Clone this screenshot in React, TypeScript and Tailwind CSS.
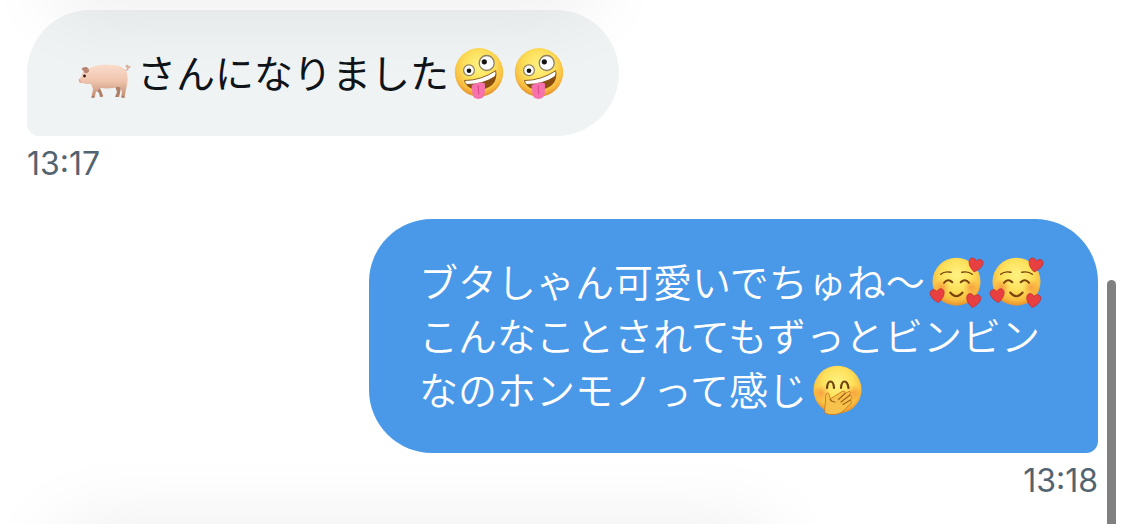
import type { ReactNode } from "react";

const emojiClass = "inline-block h-[54px] w-[60px] overflow-visible align-top";

function FaceGradient({ id }: { id: string }) {
  return (
    <defs>
      <radialGradient id={id} cx="0.5" cy="0.36" r="0.64">
        <stop offset="0" stopColor="#fff384" />
        <stop offset="0.5" stopColor="#fde05a" />
        <stop offset="0.82" stopColor="#f8bd40" />
        <stop offset="1" stopColor="#e68f2a" />
      </radialGradient>
      <radialGradient id={`${id}-blush`}>
        <stop offset="0" stopColor="#f4712f" stopOpacity="0.5" />
        <stop offset="1" stopColor="#f4712f" stopOpacity="0" />
      </radialGradient>
    </defs>
  );
}

function Pig() {
  return (
    <svg className={emojiClass} viewBox="0 -2 60 54" role="img" aria-label="豚">
      <defs>
        <linearGradient id="pig" x1="0" y1="0" x2="0" y2="1">
          <stop offset="0" stopColor="#fbdccb" />
          <stop offset="0.5" stopColor="#efc4ad" />
          <stop offset="1" stopColor="#c08c72" />
        </linearGradient>
      </defs>
      <path d="M20 40l3 2 3 7.500c.5 1-.5 1.700-3 1.500l-1-4-4-4zM38 40l6 1-1 6-1 4h-4l2-5z" fill="#b08069" />
      <path d="M47 24c3 1 4.500-1 4-3.500-.3-2-2.500-1-1.500.5s3 .5 3.500-.5" fill="none" stroke="#d9a58e" strokeWidth="1.200" strokeLinecap="round" />
      <path
        d="M2 33c1-1 2-2 3-4 1-4 4-6 8-7 6-3.500 13-3.500 20-3 8-.5 15 2 17 8 1.300 5 .4 10-.5 14l-2 10.500h-3.500l1-6-2.500-5c-6 2-13 2.500-19 1.500L19 46l-1.500 5.500h-3L16 43l-2-5c-3 0-6 0-8.500-1C2 37.500 1 35 2 33z"
        fill="url(#pig)"
      />
      <path d="M4.500 23c1-2 4-2.500 6-.5l.5 4c-2 1.500-4 .5-4.500-1.500z" fill="#b98472" />
      <path d="M8 22c2-1 4 .5 3 4" fill="none" stroke="#a06859" />
      <circle cx="7.500" cy="30" r="1.400" fill="#3a1712" />
      <path d="M2.300 33.500l1.300 3" stroke="#cf9a89" fill="none" />
      <path d="M14.500 51h3M45 51h2.500" stroke="#8d6558" strokeWidth="1.200" />
    </svg>
  );
}

function ZanyFace({ id }: { id: string }) {
  return (
    <svg className={emojiClass} viewBox="0 -2 60 54" role="img" aria-label="おどけた顔">
      <FaceGradient id={id} />
      <circle cx="30" cy="26.300" r="24.200" fill={`url(#${id})`} />
      <path d="M15.500 34.500Q32 34.500 46.700 24.700Q49 33 43 39Q35 45.500 24 43Q17 41 15.500 34.500z" fill="#8a4d10" />
      <path d="M15.500 34.500Q32 34.500 46.700 24.700Q47.500 28 46 30.500Q34 38.500 17.500 38.500Q16 37 15.500 34.500z" fill="#fff" stroke="#774814" strokeWidth="0.800" />
      <path d="M22.500 39.500Q29 35 36 37.500L35.800 47Q35 52.800 29.500 53Q24 52.800 23.500 48z" fill="#f672ac" />
      <path d="M29.300 40l.3 8" stroke="#dc4b8b" strokeWidth="1.200" strokeLinecap="round" />
      <circle cx="20" cy="24.300" r="5.400" fill="#fff" stroke="#8f8163" strokeWidth="1.200" />
      <circle cx="20" cy="24.800" r="2.300" fill="#151515" />
      <circle cx="37.700" cy="17" r="7.500" fill="#fff" stroke="#8f8163" strokeWidth="1.300" />
      <circle cx="35.300" cy="15.800" r="2.600" fill="#151515" />
    </svg>
  );
}

function Heart({ transform }: { transform: string }) {
  return (
    <path
      transform={transform}
      d="M0 7C-4 4.500-7 1-7-2.800C-7-7-2-7.500 0-4C2-7.500 7-7 7-2.800C7 1 4 4.500 0 7z"
      fill="#e83f40"
      stroke="#c02a32"
      strokeWidth="0.700"
    />
  );
}

function HeartsFace({ id }: { id: string }) {
  return (
    <svg className={emojiClass} viewBox="0 -2 60 54" role="img" aria-label="ハートに囲まれた笑顔">
      <FaceGradient id={id} />
      <circle cx="31.500" cy="26.700" r="24" fill={`url(#${id})`} />
      <circle cx="17" cy="32" r="8" fill={`url(#${id}-blush)`} />
      <circle cx="46" cy="32" r="8" fill={`url(#${id}-blush)`} />
      <g fill="none" stroke="#78420f" strokeLinecap="round">
        <path d="M15.700 19.300Q19.500 15.800 26 17.300M36.800 17.300Q43 15.800 47.300 19.300" strokeWidth="1.400" />
        <path d="M19 27.800Q23 23 27.300 27.300M35.700 27.300Q40 23 44 27.800" strokeWidth="2" />
        <path d="M25.200 37.500Q31.300 45 37.600 37.500" strokeWidth="2" />
      </g>
      <Heart transform="translate(50.500 10) rotate(12)" />
      <Heart transform="translate(12.500 40.500) rotate(-8)" />
      <Heart transform="translate(48.300 45.500) rotate(10)" />
    </svg>
  );
}

function GiggleFace({ id }: { id: string }) {
  return (
    <svg className={emojiClass} viewBox="0 -2 60 54" role="img" aria-label="口に手を当てた顔">
      <FaceGradient id={id} />
      <circle cx="30.500" cy="26.700" r="24" fill={`url(#${id})`} />
      <circle cx="14.500" cy="30" r="8" fill={`url(#${id}-blush)`} />
      <circle cx="46.500" cy="30" r="8" fill={`url(#${id}-blush)`} />
      <path d="M20 25Q20.500 18.500 23.500 18.500T27 25M34 25Q34.500 18.500 37.500 18.500T41.500 25" fill="none" stroke="#71410d" strokeWidth="2.200" strokeLinecap="round" />
      <path d="M18 50Q17 45 18.500 39Q18 33 19.500 30.500Q22 28.500 22.700 34L24 35.500L35 28.500Q39 27 38 30.500L42 28.500Q45 28.500 42.500 32L44.500 33.500Q46 35 43.500 37L44.500 38.500Q45 41 41 43Q35 51.500 27 51.500Q22 52 18 50z" fill="#f6c24b" stroke="#cc7a20" strokeWidth="0.900" />
      <path d="M31.500 36.500L38 30.500M34 39L43 32M36 41.500L43.500 37M23 36Q24.500 39 28 39" fill="none" stroke="#a45f17" strokeWidth="1.200" strokeLinecap="round" />
    </svg>
  );
}

interface MessageProps {
  time: string;
  sent?: boolean;
  children: ReactNode;
}

function Message({ time, sent, children }: MessageProps) {
  return (
    <article className={sent ? "flex flex-col items-end" : "flex flex-col items-start"}>
      <p
        className={
          sent
            ? "max-w-[729px] rounded-[63px] rounded-br-xl bg-[#4a99e9] pt-[34px] pr-[50px] pb-[38px] pl-[50px] text-[39px] leading-[54px] font-[350] text-white"
            : "max-w-[729px] rounded-[63px] rounded-bl-xl bg-[#eff3f4] pt-[34px] pr-[50px] pb-[38px] pl-[50px] text-[39px] leading-[54px] font-normal text-[#0f1419]"
        }
      >
        {children}
      </p>
      <time className="mt-2 font-['Inter',sans-serif] text-[32px] leading-10 text-[#536471]">{time}</time>
    </article>
  );
}

export default function App() {
  return (
    <div className="relative min-h-screen overflow-hidden bg-white font-['Noto_Sans_CJK_JP',sans-serif]">
      <main className="flex flex-col gap-[35px] pt-[10px] pr-[27px] pl-[27px]">
        <Message time="13:17">
          <Pig />
          さんになりました
          <ZanyFace id="zany-1" />
          <ZanyFace id="zany-2" />
        </Message>
        <Message time="13:18" sent>
          ブタしゃん可愛いでちゅね〜
          <HeartsFace id="hearts-1" />
          <HeartsFace id="hearts-2" />
          <br />
          こんなことされてもずっとビンビンなのホンモノって感じ
          <GiggleFace id="giggle" />
        </Message>
      </main>

      {/* soft shadows of the floating header and composer */}
      <div className="pointer-events-none absolute -top-10 left-16 h-8 w-[520px] rounded-full shadow-[0_0_80px_14px_rgba(0,0,0,0.09)]" />
      <div className="pointer-events-none absolute -bottom-16 left-16 h-12 w-[700px] rounded-full shadow-[0_0_80px_14px_rgba(0,0,0,0.08)]" />

      {/* scroll thumb */}
      <div className="absolute top-[280px] right-[9px] bottom-0 w-[9px] rounded-t-full bg-[#808080]" />
    </div>
  );
}
